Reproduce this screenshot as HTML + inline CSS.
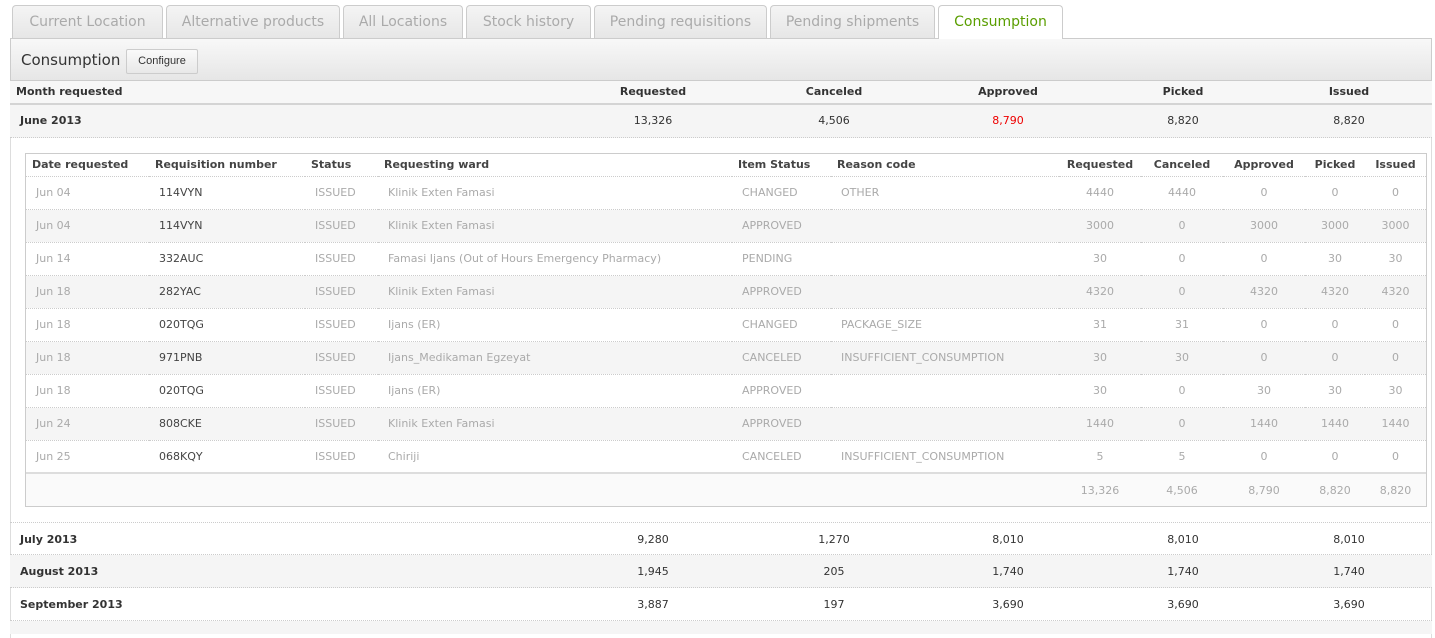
<!DOCTYPE html>
<html><head><style>
*{box-sizing:border-box;margin:0;padding:0}
body{width:1435px;height:634px;overflow:hidden;background:#fff;font-family:"DejaVu Sans","Liberation Sans",sans-serif;font-size:11px;color:#333;position:relative}
.tab{position:absolute;top:5px;height:34px;border:1px solid #ccc;border-bottom:none;border-radius:4px 4px 0 0;background:linear-gradient(#f4f4f4,#e6e6e6);color:#aaa;font-size:14px;line-height:32px;text-align:center}
.tab.act{background:#fff;color:#5a9e00;height:34px;z-index:2}
.box{position:absolute;left:10px;top:38px;width:1422px;height:600px;border-left:1px solid #ddd;border-right:1px solid #ddd;border-top:1px solid #ccc}
.hdr{position:absolute;left:10px;top:38px;width:1422px;height:43px;background:linear-gradient(#f8f8f8,#e6e6e6);border:1px solid #ccc;}
.hdr h2{position:absolute;left:10px;top:12px;font-size:15px;font-weight:normal;color:#333}
.btn{position:absolute;left:115px;top:10px;width:72px;height:25px;border:1px solid #ccc;border-radius:2px;background:linear-gradient(#fafafa,#e8e8e8);font-family:"Liberation Sans",sans-serif;font-size:11px;line-height:23px;text-align:center;color:#333}
.row{position:absolute;left:10px;width:1422px;font-weight:bold;color:#333}
.row span{position:absolute;transform:translateX(-50%);font-weight:normal}
.row b{position:absolute;left:10px}
.in{position:absolute;left:25px;top:153px;width:1402px;height:354px;border:1px solid #ccc}
table{border-collapse:collapse;table-layout:fixed;width:1400px}
td,th{height:33px;padding:0;white-space:nowrap;overflow:hidden;border-bottom:1px dotted #ccc}
th{height:22px;text-align:left;padding-left:6px;color:#444;font-size:11px}
td{color:#aaa;padding-left:10px}
td.n{text-align:center;padding-left:0}
th.n{text-align:center;padding-left:0}
td.r{color:#444}
tr.g td{background:#f5f5f5}
tr.f td{background:#fafafa;border:none}
</style></head><body>
<div class="tab" style="left:12px;width:151px">Current Location</div>
<div class="tab" style="left:166px;width:174px">Alternative products</div>
<div class="tab" style="left:343px;width:120px">All Locations</div>
<div class="tab" style="left:466px;width:125px">Stock history</div>
<div class="tab" style="left:594px;width:173px">Pending requisitions</div>
<div class="tab" style="left:770px;width:165px">Pending shipments</div>
<div class="tab act" style="left:938px;width:125px">Consumption</div>
<div class="box"></div>
<div class="hdr"><h2>Consumption</h2><div class="btn">Configure</div></div>
<div class="row" style="top:81px;background:#f7f7f7;line-height:22px;border-bottom:3px solid #d4d4d4;height:25px"><b style="left:6px">Month requested</b><span style="left:643px;font-weight:bold">Requested</span><span style="left:824px;font-weight:bold">Canceled</span><span style="left:998px;font-weight:bold">Approved</span><span style="left:1173px;font-weight:bold">Picked</span><span style="left:1339px;font-weight:bold">Issued</span></div>
<div class="row" style="top:105px;height:33px;background:#f5f5f5;line-height:32px;border-bottom:1px dotted #ccc"><b>June 2013</b><span style="left:643px">13,326</span><span style="left:824px">4,506</span><span style="left:998px;color:#e00">8,790</span><span style="left:1173px">8,820</span><span style="left:1339px">8,820</span></div>
<div class="in"><table>
<colgroup><col style="width:123px"><col style="width:156px"><col style="width:73px"><col style="width:354px"><col style="width:99px"><col style="width:228px"><col style="width:82px"><col style="width:82px"><col style="width:82px"><col style="width:60px"><col style="width:61px"></colgroup>
<tr style="background:#fff"><th>Date requested</th><th>Requisition number</th><th>Status</th><th>Requesting ward</th><th>Item Status</th><th>Reason code</th><th class="n">Requested</th><th class="n">Canceled</th><th class="n">Approved</th><th class="n">Picked</th><th class="n">Issued</th></tr>
<tr><td>Jun 04</td><td class="r">114VYN</td><td>ISSUED</td><td>Klinik Exten Famasi</td><td>CHANGED</td><td>OTHER</td><td class="n">4440</td><td class="n">4440</td><td class="n">0</td><td class="n">0</td><td class="n">0</td></tr>
<tr class="g"><td>Jun 04</td><td class="r">114VYN</td><td>ISSUED</td><td>Klinik Exten Famasi</td><td>APPROVED</td><td></td><td class="n">3000</td><td class="n">0</td><td class="n">3000</td><td class="n">3000</td><td class="n">3000</td></tr>
<tr><td>Jun 14</td><td class="r">332AUC</td><td>ISSUED</td><td>Famasi Ijans (Out of Hours Emergency Pharmacy)</td><td>PENDING</td><td></td><td class="n">30</td><td class="n">0</td><td class="n">0</td><td class="n">30</td><td class="n">30</td></tr>
<tr class="g"><td>Jun 18</td><td class="r">282YAC</td><td>ISSUED</td><td>Klinik Exten Famasi</td><td>APPROVED</td><td></td><td class="n">4320</td><td class="n">0</td><td class="n">4320</td><td class="n">4320</td><td class="n">4320</td></tr>
<tr><td>Jun 18</td><td class="r">020TQG</td><td>ISSUED</td><td>Ijans (ER)</td><td>CHANGED</td><td>PACKAGE_SIZE</td><td class="n">31</td><td class="n">31</td><td class="n">0</td><td class="n">0</td><td class="n">0</td></tr>
<tr class="g"><td>Jun 18</td><td class="r">971PNB</td><td>ISSUED</td><td>Ijans_Medikaman Egzeyat</td><td>CANCELED</td><td>INSUFFICIENT_CONSUMPTION</td><td class="n">30</td><td class="n">30</td><td class="n">0</td><td class="n">0</td><td class="n">0</td></tr>
<tr><td>Jun 18</td><td class="r">020TQG</td><td>ISSUED</td><td>Ijans (ER)</td><td>APPROVED</td><td></td><td class="n">30</td><td class="n">0</td><td class="n">30</td><td class="n">30</td><td class="n">30</td></tr>
<tr class="g"><td>Jun 24</td><td class="r">808CKE</td><td>ISSUED</td><td>Klinik Exten Famasi</td><td>APPROVED</td><td></td><td class="n">1440</td><td class="n">0</td><td class="n">1440</td><td class="n">1440</td><td class="n">1440</td></tr>
<tr><td style="border-bottom:2px solid #ddd">Jun 25</td><td class="r" style="border-bottom:2px solid #ddd">068KQY</td><td style="border-bottom:2px solid #ddd">ISSUED</td><td style="border-bottom:2px solid #ddd">Chiriji</td><td style="border-bottom:2px solid #ddd">CANCELED</td><td style="border-bottom:2px solid #ddd">INSUFFICIENT_CONSUMPTION</td><td class="n" style="border-bottom:2px solid #ddd">5</td><td class="n" style="border-bottom:2px solid #ddd">5</td><td class="n" style="border-bottom:2px solid #ddd">0</td><td class="n" style="border-bottom:2px solid #ddd">0</td><td class="n" style="border-bottom:2px solid #ddd">0</td></tr>
<tr class="f"><td></td><td></td><td></td><td></td><td></td><td></td><td class="n">13,326</td><td class="n">4,506</td><td class="n">8,790</td><td class="n">8,820</td><td class="n">8,820</td></tr>
</table></div>
<div class="row" style="top:522px;height:33px;line-height:33px;border-top:1px dotted #ccc;border-bottom:1px dotted #ccc"><b>July 2013</b><span style="left:643px">9,280</span><span style="left:824px">1,270</span><span style="left:998px">8,010</span><span style="left:1173px">8,010</span><span style="left:1339px">8,010</span></div>
<div class="row" style="top:555px;height:33px;line-height:33px;background:#f5f5f5;border-bottom:1px dotted #ccc"><b>August 2013</b><span style="left:643px">1,945</span><span style="left:824px">205</span><span style="left:998px">1,740</span><span style="left:1173px">1,740</span><span style="left:1339px">1,740</span></div>
<div class="row" style="top:588px;height:33px;line-height:33px;border-bottom:1px dotted #ccc"><b>September 2013</b><span style="left:643px">3,887</span><span style="left:824px">197</span><span style="left:998px">3,690</span><span style="left:1173px">3,690</span><span style="left:1339px">3,690</span></div>
<div class="row" style="top:621px;height:13px;background:#f5f5f5"></div>
</body></html>
